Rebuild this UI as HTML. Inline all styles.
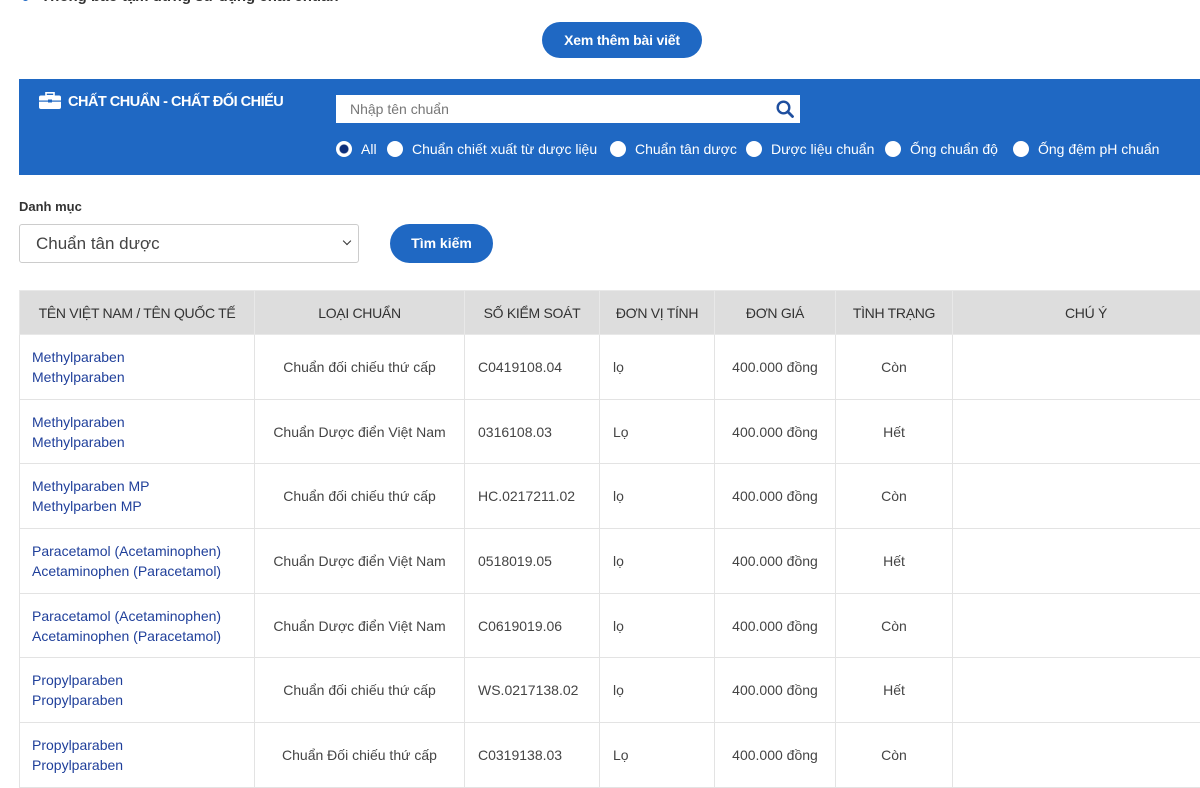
<!DOCTYPE html>
<html><head><meta charset="utf-8"><style>
*{box-sizing:border-box;margin:0;padding:0}
body{width:1200px;height:762px;overflow:hidden;background:#fff;font-family:"Liberation Sans",sans-serif;color:#333;position:relative}
.top{position:absolute;left:22px;top:-12px;font-size:15px;font-weight:bold;color:#333}
.top:before{content:"";display:inline-block;width:7px;height:7px;border-radius:50%;background:#1f68c3;margin-right:12px;vertical-align:middle}
.more{position:absolute;left:542px;top:22px;width:160px;height:36px;border-radius:18px;background:#1f68c3;color:#fff;font-weight:bold;font-size:14px;text-align:center;line-height:36px;letter-spacing:-0.2px}
.band{position:absolute;left:19px;top:79px;width:1181px;height:96px;background:#1f68c3;color:#fff}
.title{position:absolute;left:20px;top:13px;font-weight:bold;font-size:14.5px;letter-spacing:-0.5px;white-space:nowrap}
.title svg{vertical-align:-3px;margin-right:7px}
.search{position:absolute;left:317px;top:16px;width:464px;height:28px;background:#fff;color:#777;font-size:14px;line-height:28px;padding-left:14px}
.search svg{position:absolute;right:6px;top:5px}
.radios span{position:absolute;top:62px;font-size:14px;white-space:nowrap}
.radios i{display:inline-block;width:16px;height:16px;border-radius:50%;background:#fff;vertical-align:-3px;margin-right:9px}
.radios i.on{background:radial-gradient(circle,#0d2f7a 0 4px,#fff 5px)}
.lbl{position:absolute;left:19px;top:199px;font-size:13px;font-weight:bold;color:#333}
.sel{position:absolute;left:19px;top:224px;width:340px;height:39px;border:1px solid #ccc;border-radius:3px;font-size:17px;line-height:37px;padding-left:16px;color:#444}
.sel:after{content:"";position:absolute;right:8px;top:13px;width:5px;height:5px;border-right:1.5px solid #333;border-bottom:1.5px solid #333;transform:rotate(45deg)}
.btn{position:absolute;left:390px;top:224px;width:103px;height:39px;border-radius:20px;background:#1f68c3;color:#fff;font-weight:bold;font-size:14px;text-align:center;line-height:39px}
table{position:absolute;left:19px;top:290px;border-collapse:collapse;font-size:14px;table-layout:fixed;width:1200px}
th{background:#ddd;font-weight:normal;height:44px;border:1px solid #e8e8e8;color:#333;text-align:center;letter-spacing:-0.3px}
td{height:64.7px;border:1px solid #e3e3e3;text-align:center;color:#444}
td.n{text-align:left;padding-left:12px;color:#1f3f9a;line-height:20px}
td.l{text-align:left;padding-left:13px}
</style></head><body>
<div class="top">Thông báo tạm dừng sử dụng chất chuẩn</div>
<div class="more">Xem thêm bài viết</div>
<div class="band">
<div class="title"><svg width="22" height="17" viewBox="0 0 22 17"><rect x="7" y="0.8" width="8" height="3" fill="none" stroke="#fff" stroke-width="1.6"/><rect x="0" y="3.5" width="22" height="13.5" rx="2" fill="#fff"/><rect x="0" y="8.5" width="22" height="1.2" fill="#1f68c3"/><rect x="9" y="7.5" width="4" height="3" fill="#1f68c3"/></svg>CHẤT CHUẨN - CHẤT ĐỐI CHIẾU</div>
<div class="search">Nhập tên chuẩn<svg width="18" height="18" viewBox="0 0 18 18"><circle cx="7.5" cy="7.5" r="5.8" fill="none" stroke="#1f4f9f" stroke-width="2.4"/><path d="M11.8 11.8L16.5 16.5" stroke="#1f4f9f" stroke-width="2.8" stroke-linecap="round"/></svg></div>
<div class="radios"><span style="left:317px"><i class="on"></i>All</span><span style="left:368px"><i></i>Chuẩn chiết xuất từ dược liệu</span><span style="left:591px"><i></i>Chuẩn tân dược</span><span style="left:727px"><i></i>Dược liệu chuẩn</span><span style="left:866px"><i></i>Ống chuẩn độ</span><span style="left:994px"><i></i>Ống đệm pH chuẩn</span></div>
</div>
<div class="lbl">Danh mục</div>
<div class="sel">Chuẩn tân dược</div>
<div class="btn">Tìm kiếm</div>
<table>
<colgroup><col style="width:235px"><col style="width:210px"><col style="width:135px"><col style="width:115px"><col style="width:121px"><col style="width:117px"><col style="width:267px"></colgroup>
<tr><th>TÊN VIỆT NAM / TÊN QUỐC TẾ</th><th>LOẠI CHUẨN</th><th>SỐ KIỂM SOÁT</th><th>ĐƠN VỊ TÍNH</th><th>ĐƠN GIÁ</th><th>TÌNH TRẠNG</th><th>CHÚ Ý</th></tr>
<tr><td class="n">Methylparaben<br>Methylparaben</td><td>Chuẩn đối chiếu thứ cấp</td><td class="l">C0419108.04</td><td class="l">lọ</td><td>400.000 đồng</td><td>Còn</td><td></td></tr>
<tr><td class="n">Methylparaben<br>Methylparaben</td><td>Chuẩn Dược điển Việt Nam</td><td class="l">0316108.03</td><td class="l">Lọ</td><td>400.000 đồng</td><td>Hết</td><td></td></tr>
<tr><td class="n">Methylparaben MP<br>Methylparben MP</td><td>Chuẩn đối chiếu thứ cấp</td><td class="l">HC.0217211.02</td><td class="l">lọ</td><td>400.000 đồng</td><td>Còn</td><td></td></tr>
<tr><td class="n">Paracetamol (Acetaminophen)<br>Acetaminophen (Paracetamol)</td><td>Chuẩn Dược điển Việt Nam</td><td class="l">0518019.05</td><td class="l">lọ</td><td>400.000 đồng</td><td>Hết</td><td></td></tr>
<tr><td class="n">Paracetamol (Acetaminophen)<br>Acetaminophen (Paracetamol)</td><td>Chuẩn Dược điển Việt Nam</td><td class="l">C0619019.06</td><td class="l">lọ</td><td>400.000 đồng</td><td>Còn</td><td></td></tr>
<tr><td class="n">Propylparaben<br>Propylparaben</td><td>Chuẩn đối chiếu thứ cấp</td><td class="l">WS.0217138.02</td><td class="l">lọ</td><td>400.000 đồng</td><td>Hết</td><td></td></tr>
<tr><td class="n">Propylparaben<br>Propylparaben</td><td>Chuẩn Đối chiếu thứ cấp</td><td class="l">C0319138.03</td><td class="l">Lọ</td><td>400.000 đồng</td><td>Còn</td><td></td></tr>
</table>
</body></html>
